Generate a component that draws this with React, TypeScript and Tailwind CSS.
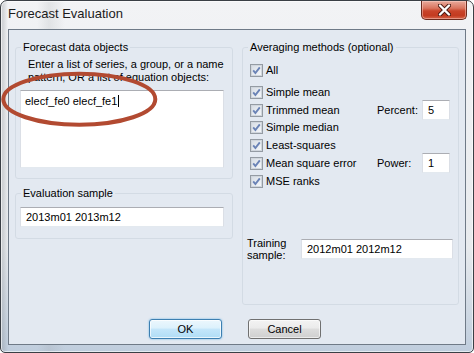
import React from "react";

function Check() {
  return (
    <svg width="13" height="13" viewBox="0 0 13 13" className="shrink-0">
      <defs>
        <linearGradient id="cbfill" x1="0" y1="0" x2="1" y2="1">
          <stop offset="0" stopColor="#d6dce4" />
          <stop offset="1" stopColor="#f6f8fa" />
        </linearGradient>
      </defs>
      <rect x="0.5" y="0.5" width="12" height="12" fill="#f6f6f6" stroke="#949ba3" />
      <rect x="1.5" y="1.5" width="10" height="10" fill="url(#cbfill)" stroke="#d0d6dd" />
      <path d="M3.2 6.3 L5.4 9 L9.8 3.3" fill="none" stroke="#6a83b6" strokeWidth="1.9" />
    </svg>
  );
}

const field =
  "border border-t-[#abadb3] border-x-[#dbdfe6] border-b-[#e3e9ef] bg-white";

const group =
  "rounded-[3px] border border-[#d3dbe4] p-0";

function Row({
  label,
  extra,
  value,
  h = "h-[18px]",
}: {
  label: string;
  extra?: string;
  value?: string;
  h?: string;
}) {
  return (
    <div className={`ml-[7px] flex items-center ${h}`}>
      <Check />
      <span className="ml-[3px] w-[111px] whitespace-nowrap">{label}</span>
      {extra && (
        <>
          <span className="w-[45px]">{extra}</span>
          <div className={`${field} flex h-[20px] w-[28px] items-center pl-[5px]`}>
            {value}
          </div>
        </>
      )}
    </div>
  );
}

export default function App() {
  return (
    <div className="relative h-[353px] w-[474px] overflow-hidden rounded-t-[7px] rounded-b-[5px] border border-[#3a3f45] bg-[linear-gradient(90deg,rgba(130,135,140,0.28)_2px,transparent_7px,transparent_36px,rgba(140,145,150,0.16)_48px,transparent_64px),linear-gradient(180deg,#f2f3f5,#e8ebee_70%,#bfcddd)] font-['Liberation_Sans',Arial,sans-serif] text-black shadow-[inset_0_0_0_1px_rgba(255,255,255,0.6)]">
      {/* title bar */}
      <div className="flex h-[28px] items-start justify-between">
        <div className="pl-[7px] pt-[5px] text-[13px] leading-[16px] text-[#1b1b1b]">
          Forecast Evaluation
        </div>
        <button className="mr-[6px] flex h-[19px] w-[46px] items-center justify-center rounded-b-[5px] border border-t-0 border-[#6b2b1e] bg-[linear-gradient(180deg,#e9ab9c_0%,#d9755f_40%,#c9442a_55%,#c33b20_80%,#d5644a_100%)] shadow-[inset_0_0_0_1px_rgba(255,220,210,0.45)]">
          <svg width="13" height="12" viewBox="0 0 13 12">
            <path d="M2 1.5 L11 10.5 M11 1.5 L2 10.5" stroke="#4a1a12" strokeWidth="4.2" strokeLinecap="round" />
            <path d="M2 1.5 L11 10.5 M11 1.5 L2 10.5" stroke="#ffffff" strokeWidth="2.4" strokeLinecap="round" />
          </svg>
        </button>
      </div>

      {/* client area */}
      <div className="mx-[7px] h-[316px] border border-[#6f7a87] bg-[#e3e9f1] text-[11px] leading-[13px]">
        <div className="flex gap-[9px] pl-[6px] pt-[11px]">
          <div className="flex w-[218px] flex-col">
            <fieldset className={group}>
              <legend className="ml-[5px] px-[2px] leading-[12px]">Forecast data objects</legend>
              <div className="ml-[12px] mt-[5px]">
                Enter a list of series, a group, or a name
                <br />
                pattern, OR a list of equation objects:
              </div>
              <div className={`${field} mb-[10px] ml-[4px] mt-[6px] h-[78px] w-[204px] pl-[4px] pt-[4px]`}>
                <span className="border-r border-black pr-[1px]">elecf_fe0 elecf_fe1</span>
              </div>
            </fieldset>
            <fieldset className={`mt-[8px] ${group}`}>
              <legend className="ml-[5px] px-[2px] leading-[12px]">Evaluation sample</legend>
              <div className={`${field} mb-[11px] ml-[4px] mt-[8px] flex h-[20px] w-[204px] items-center pl-[5px]`}>
                2013m01 2013m12
              </div>
            </fieldset>
          </div>

          <fieldset className={`flex h-[264px] w-[217px] flex-col ${group}`}>
            <legend className="ml-[5px] px-[2px] leading-[12px]">Averaging methods (optional)</legend>
            <div className="mt-[8px]">
              <Row label="All" />
            </div>
            <div className="mt-[4px]">
              <Row label="Simple mean" />
              <Row label="Trimmed mean" extra="Percent:" value="5" />
              <Row label="Simple median" h="h-[17px]" />
              <Row label="Least-squares" />
              <Row label="Mean square error" extra="Power:" value="1" />
              <Row label="MSE ranks" />
            </div>
            <div className="ml-[4px] mt-[47px] flex h-[24px] items-center">
              <div className="w-[54px] leading-[12px]">
                Training
                <br />
                sample:
              </div>
              <div className={`${field} flex h-[20px] w-[152px] items-center pl-[5px]`}>
                2012m01 2012m12
              </div>
            </div>
          </fieldset>
        </div>

        <div className="ml-[140px] mt-[14px] flex gap-[26px]">
          <button className="h-[20px] w-[73px] rounded-[3px] border border-[#3c7fb1] bg-[linear-gradient(180deg,#ecf7fd_0%,#dcf1fc_45%,#c4e6fa_50%,#b0ddf6_100%)] text-[11px] shadow-[inset_0_0_0_1px_rgba(255,255,255,0.7),0_0_2px_rgba(80,170,230,0.9)]">
            OK
          </button>
          <button className="h-[20px] w-[73px] rounded-[3px] border border-[#707070] bg-[linear-gradient(180deg,#f3f3f3_0%,#ebebeb_45%,#dddddd_50%,#cfcfcf_100%)] text-[11px] shadow-[inset_0_0_0_1px_rgba(255,255,255,0.6)]">
            Cancel
          </button>
        </div>
      </div>

      {/* hand-drawn annotation */}
      <svg
        width="162"
        height="62"
        viewBox="0 0 162 62"
        className="pointer-events-none absolute left-0 top-[69px] overflow-visible"
      >
        <ellipse cx="78.3" cy="29.2" rx="76" ry="25.5" fill="none" stroke="#b24a31" strokeWidth="4" />
      </svg>
    </div>
  );
}
